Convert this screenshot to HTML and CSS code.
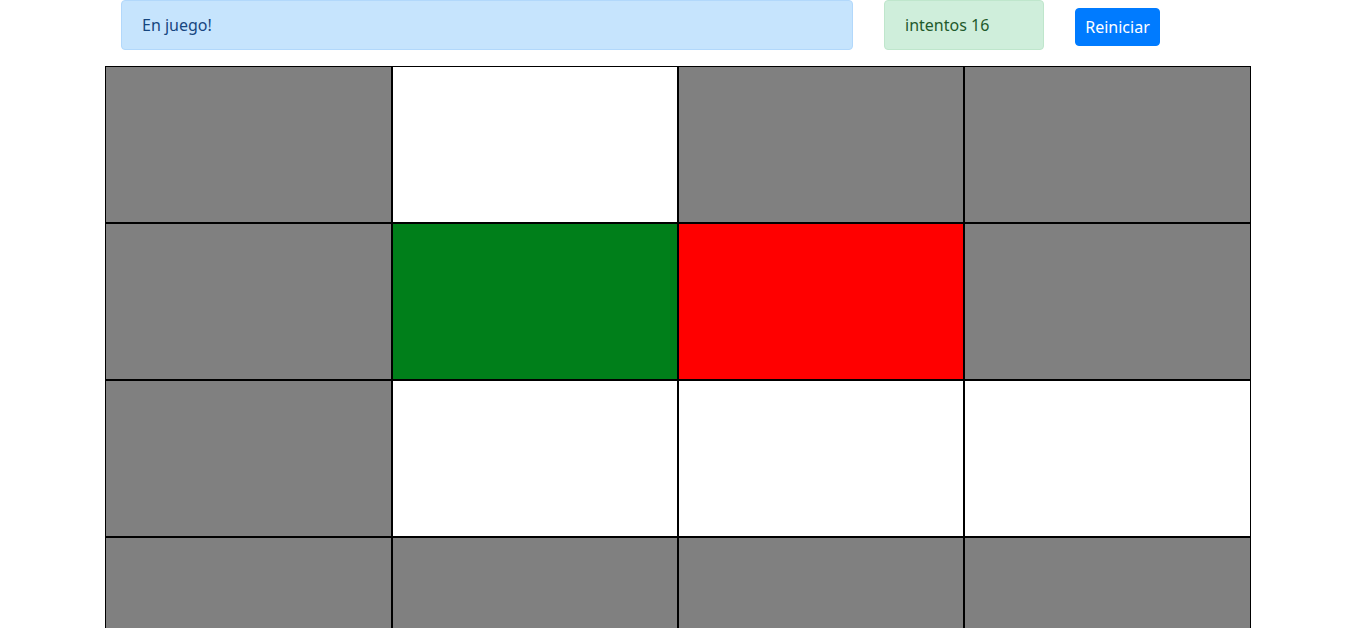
FILE: index.html
```html
<!DOCTYPE html>
<html lang="es">
<head>
<meta charset="utf-8">
<title>Juego</title>
<link rel="stylesheet" href="styles.css">
</head>
<body>
<div class="page">
  <div class="topbar">
    <div class="alert alert-primary">En juego!</div>
    <div class="alert alert-success">intentos 16</div>
    <button class="btn">Reiniciar</button>
  </div>
  <div class="board">
    <div class="cell gray"></div>
    <div class="cell white"></div>
    <div class="cell gray"></div>
    <div class="cell gray"></div>
    <div class="cell gray"></div>
    <div class="cell green"></div>
    <div class="cell red"></div>
    <div class="cell gray"></div>
    <div class="cell gray"></div>
    <div class="cell white"></div>
    <div class="cell white"></div>
    <div class="cell white"></div>
    <div class="cell gray"></div>
    <div class="cell gray"></div>
    <div class="cell gray"></div>
    <div class="cell gray"></div>
  </div>
</div>
</body>
</html>
```

FILE: styles.css
```css
html, body {
  margin: 0;
  padding: 0;
  overflow: hidden;
  background: #fff;
  font-family: "Segoe UI", "Noto Sans", "Open Sans", sans-serif;
  font-size: 16px;
}

.page {
  padding-left: 105px;
}

.topbar {
  display: flex;
  align-items: flex-start;
  padding-left: 16px;
  gap: 31px;
  margin-bottom: 16px;
}

.alert {
  box-sizing: border-box;
  height: 50px;
  padding: 12px 20px;
  border: 1px solid transparent;
  border-radius: 4px;
  line-height: 24px;
}

.alert-primary {
  width: 732px;
  background: #c6e4fd;
  border-color: #b2d8fb;
  color: #17467f;
}

.alert-success {
  width: 160px;
  background: #cfeedb;
  border-color: #bfe6cc;
  color: #1f5a2c;
}

.btn {
  margin-top: 8px;
  box-sizing: border-box;
  height: 38px;
  width: 85px;
  padding: 6px 0;
  border: 1px solid #007bff;
  border-radius: 4px;
  background: #007bff;
  color: #fff;
  font-family: inherit;
  font-size: 16px;
  line-height: 24px;
}

.board {
  display: grid;
  width: 1146px;
  grid-template-columns: 287px 286px 286px 287px;
  grid-auto-rows: 157px;
}

.cell {
  border: 1px solid #000;
}

.gray { background: #808080; }
.white { background: #fff; }
.green { background: #007f1a; }
.red { background: #ff0000; }
```
